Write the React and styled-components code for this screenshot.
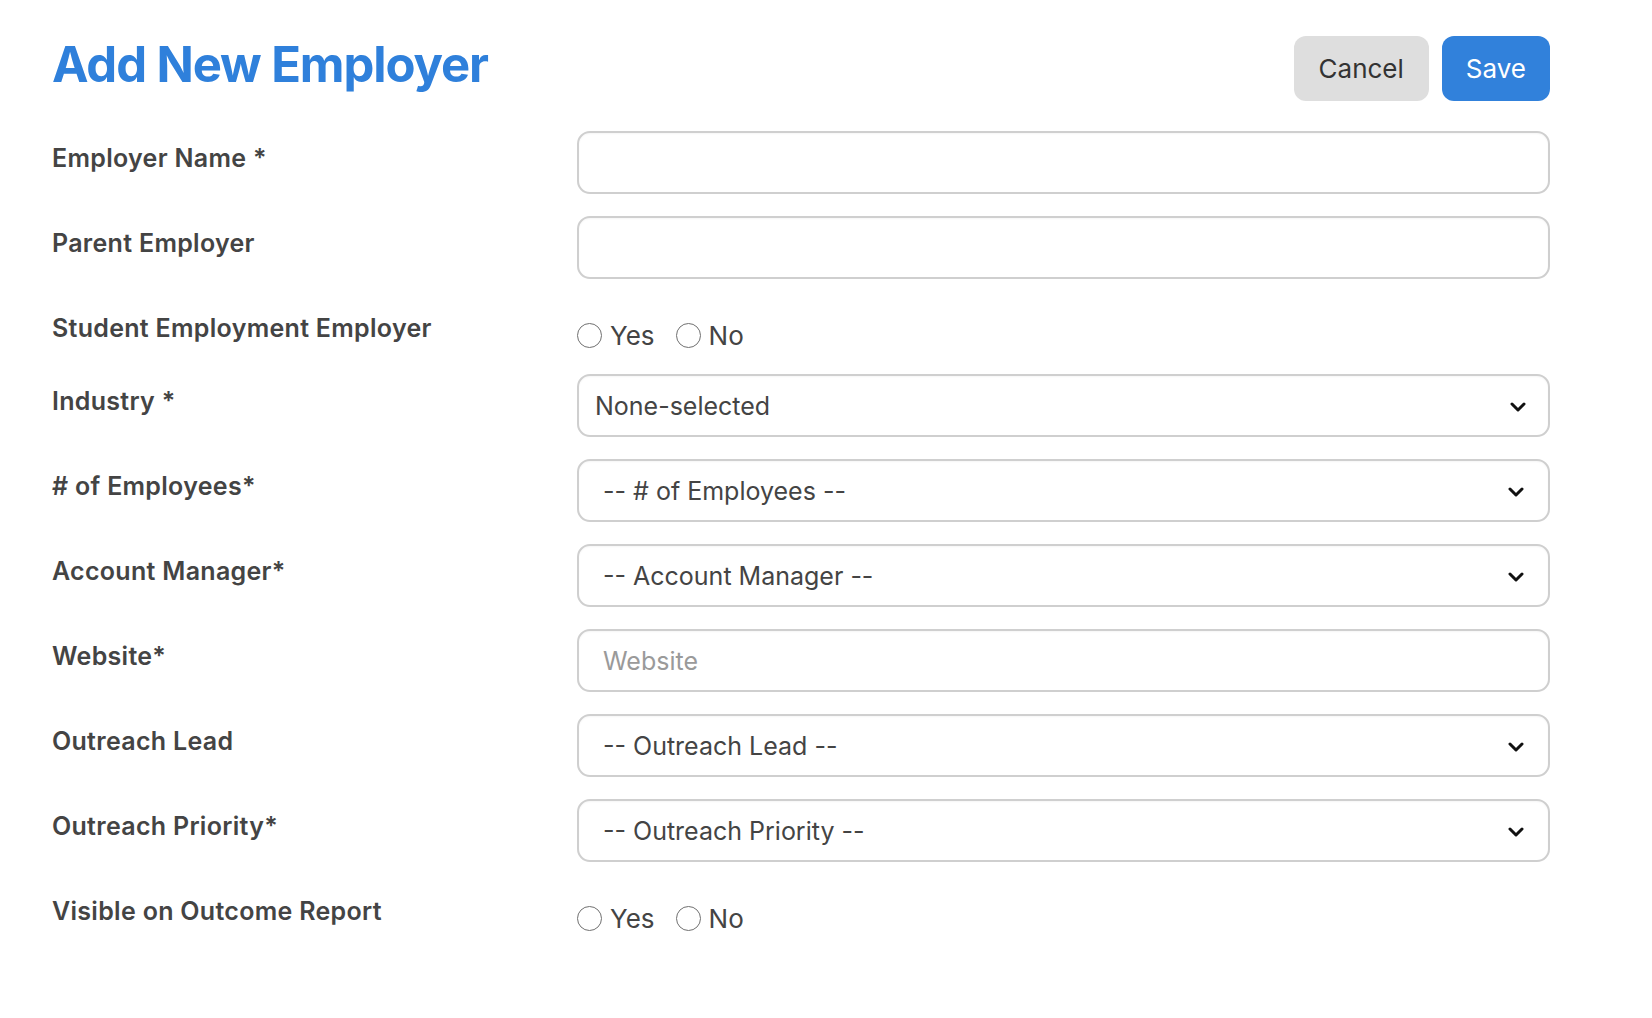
import React from 'react';
import styled, { createGlobalStyle } from 'styled-components';

const GlobalStyle = createGlobalStyle`
  body {
    margin: 0;
    background: #fff;
    font-family: Inter, "Open Sans", sans-serif;
    color: #444;
  }
`;

const Page = styled.div`
  width: 1498px;
  padding: 36px 0 40px 52px;
`;

const Header = styled.div`
  display: flex;
  justify-content: space-between;
  align-items: flex-start;
  margin-bottom: 30px;
`;

const Title = styled.h1`
  margin: -1px 0 0;
  font-size: 49px;
  line-height: 60px;
  font-weight: 700;
  letter-spacing: -1.1px;
  color: #2f80db;
`;

const Actions = styled.div`
  display: flex;
  gap: 13px;
`;

const Button = styled.button`
  height: 65px;
  padding: 0 ${p => (p.primary ? '24px' : '25px')};
  border: none;
  border-radius: 12px;
  font-family: inherit;
  font-size: 26px;
  font-weight: 400;
  background: ${p => (p.primary ? '#3181db' : '#dedede')};
  color: ${p => (p.primary ? '#fff' : '#333')};
  cursor: pointer;
`;

const Form = styled.form`
  display: flex;
  flex-direction: column;
  gap: 22px;
`;

const Row = styled.div`
  display: grid;
  grid-template-columns: 525px 1fr;
  align-items: start;
`;

const Label = styled.label`
  padding-top: 12px;
  font-size: 25px;
  line-height: 1.2;
  font-weight: 600;
  letter-spacing: 0.3px;
  color: #444;
`;

const fieldBase = `
  box-sizing: border-box;
  width: 100%;
  height: 63px;
  border: 2px solid #cfcfcf;
  border-radius: 13px;
  background: #fff;
  font-family: Inter, "Open Sans", sans-serif;
  font-size: 25px;
  color: #444;
  outline: none;
  box-shadow: inset 0 1px 2px rgba(0, 0, 0, 0.04);
`;

const TextInput = styled.input`
  ${fieldBase}
  padding: 0 24px;
  &::placeholder {
    color: #9a9a9a;
  }
`;

const SelectWrap = styled.div`
  position: relative;
`;

const Select = styled.select`
  ${fieldBase}
  appearance: none;
  padding: 0 60px 0 ${p => (p.tight ? '16px' : '24px')};
`;

const Chevron = styled.svg`
  position: absolute;
  right: ${p => (p.tight ? '24px' : '26px')};
  top: 50%;
  width: 16px;
  height: 10px;
  margin-top: -4px;
  pointer-events: none;
`;

const RadioGroup = styled.div`
  display: flex;
  align-items: center;
  gap: 21px;
  padding-top: 17px;
  height: 34px;
`;

const RadioOption = styled.label`
  display: flex;
  align-items: center;
  gap: 8px;
  font-size: 26px;
  color: #444;
`;

const Radio = styled.input`
  appearance: none;
  margin: 0;
  width: 25px;
  height: 25px;
  border: 1.5px solid #707070;
  border-radius: 50%;
  background: #fff;
`;

function ChevronIcon({ tight }) {
  return (
    <Chevron tight={tight} viewBox="0 0 16 10">
      <polyline points="2,2 8,8 14,2" fill="none" stroke="#111" strokeWidth="3" strokeLinecap="round" strokeLinejoin="round" />
    </Chevron>
  );
}

function SelectField({ value, tight }) {
  return (
    <SelectWrap>
      <Select tight={tight} defaultValue={value}>
        <option>{value}</option>
      </Select>
      <ChevronIcon tight={tight} />
    </SelectWrap>
  );
}

function YesNo({ name }) {
  return (
    <RadioGroup>
      <RadioOption>
        <Radio type="radio" name={name} />
        Yes
      </RadioOption>
      <RadioOption>
        <Radio type="radio" name={name} />
        No
      </RadioOption>
    </RadioGroup>
  );
}

export default function App() {
  return (
    <>
      <GlobalStyle />
      <Page>
        <Header>
          <Title>Add New Employer</Title>
          <Actions>
            <Button type="button">Cancel</Button>
            <Button type="button" primary>Save</Button>
          </Actions>
        </Header>
        <Form onSubmit={e => e.preventDefault()}>
          <Row>
            <Label>Employer Name *</Label>
            <TextInput type="text" />
          </Row>
          <Row>
            <Label>Parent Employer</Label>
            <TextInput type="text" />
          </Row>
          <Row>
            <Label>Student Employment Employer</Label>
            <YesNo name="student" />
          </Row>
          <Row>
            <Label>Industry *</Label>
            <SelectField value="None-selected" tight />
          </Row>
          <Row>
            <Label># of Employees*</Label>
            <SelectField value="-- # of Employees --" />
          </Row>
          <Row>
            <Label>Account Manager*</Label>
            <SelectField value="-- Account Manager --" />
          </Row>
          <Row>
            <Label>Website*</Label>
            <TextInput type="text" placeholder="Website" />
          </Row>
          <Row>
            <Label>Outreach Lead</Label>
            <SelectField value="-- Outreach Lead --" />
          </Row>
          <Row>
            <Label>Outreach Priority*</Label>
            <SelectField value="-- Outreach Priority --" />
          </Row>
          <Row>
            <Label>Visible on Outcome Report</Label>
            <YesNo name="visible" />
          </Row>
        </Form>
      </Page>
    </>
  );
}
